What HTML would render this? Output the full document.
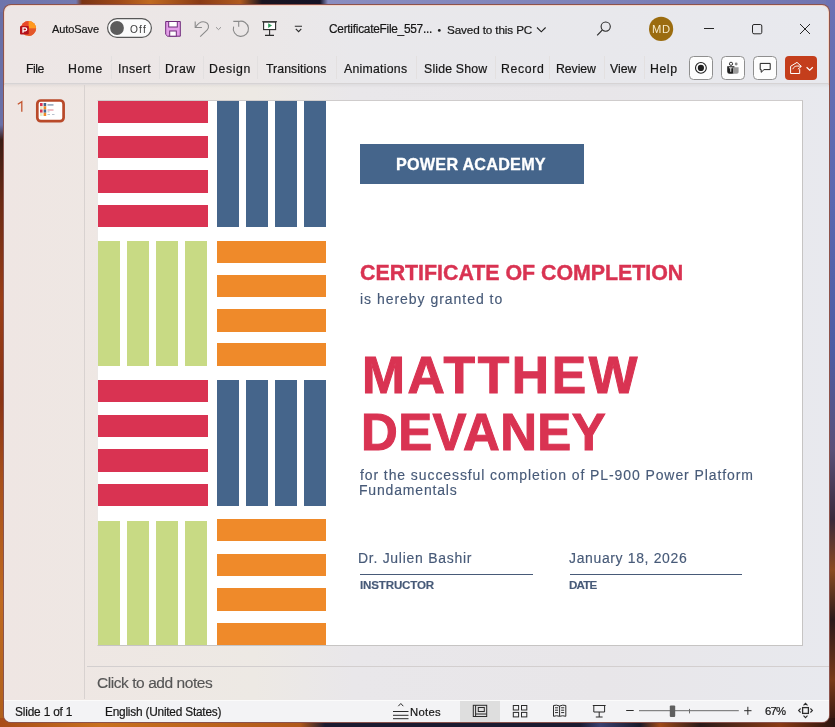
<!DOCTYPE html>
<html><head><meta charset="utf-8">
<style>
*{margin:0;padding:0;box-sizing:border-box}
html,body{width:835px;height:727px;overflow:hidden}
body{position:relative;font-family:"Liberation Sans",sans-serif;background:#6f73ab}
.a{position:absolute}
.t{position:absolute;white-space:nowrap;line-height:1;will-change:transform}
.tb{color:#161616;-webkit-text-stroke:0.2px #161616}
.tab{color:#161616;-webkit-text-stroke:0.2px #161616}
.sl{color:#161616;-webkit-text-stroke:0.2px #161616}
.ct{color:#d93352;font-weight:bold;-webkit-text-stroke:0.4px #d93352}
.bl{color:#475a78;-webkit-text-stroke:0.15px #475a78}
</style></head><body>
<!-- wallpaper -->
<div class="a" style="left:0;top:0;width:835px;height:727px;background:linear-gradient(90deg,#6e74ac 0,#7479b0 76px,#7a3414 82px,#a04a18 120px,#c06a20 150px,#8a3a14 200px,#b05a1e 240px,#1a1420 262px,#141226 320px,#8a8dc0 328px,#7e82b8 600px,#7074b0 835px)"></div>
<div class="a" style="left:0;top:12px;width:8px;height:715px;background:linear-gradient(180deg,#6a70a8 0,#6a70a8 113px,#3a1c14 128px,#6a2a14 188px,#9a3e16 288px,#8a3414 388px,#a8501a 468px,#c06a20 588px,#b0601c 715px)"></div>
<div class="a" style="left:826px;top:0;width:9px;height:727px;background:linear-gradient(180deg,#6c72b4 0,#5a68b0 200px,#4c5ca4 350px,#5a5078 450px,#3a2a3a 520px,#8a4a20 570px,#2a1a1a 620px,#7a3a18 680px,#2a1410 727px)"></div>
<div class="a" style="left:0;top:718px;width:835px;height:9px;background:linear-gradient(90deg,#a84c18 0,#c8701e 100px,#b0581a 300px,#1c1a30 325px,#1c1a30 580px,#3a4070 600px,#1a1a2a 640px,#a04a18 660px,#2a1a1a 700px,#8a3a14 780px,#2a1410 835px)"></div>

<!-- window -->
<div class="a" style="left:3px;top:4px;width:827px;height:719px;border-radius:8px;border:1px solid rgba(100,20,10,0.7);background-clip:padding-box;box-shadow:inset 0 0 0 1px #f7d6c8;background:linear-gradient(90deg,#ede6e5 0,#ebe7e7 250px,#e9e8eb 350px,#e8e8ec 600px,#e8e9ee 826px);overflow:hidden">
  <!-- ribbon bottom line -->
  <div class="a" style="left:0;top:78px;width:826px;height:1px;background:#d6d3d4"></div>
  <!-- content area -->
  <div class="a" style="left:0;top:80px;width:826px;height:616px;background:linear-gradient(90deg,#efe6e3 0,#ede9e4 250px,#e9e7ea 350px,#e8e6e9 600px,#e8e9ee 826px)"></div>
  <div class="a" style="left:0;top:79px;width:826px;height:4px;background:linear-gradient(180deg,rgba(0,0,0,0.05),rgba(0,0,0,0))"></div>
  <!-- sidebar separator -->
  <div class="a" style="left:80px;top:80px;width:1px;height:614px;background:#d8d2d0"></div>
  <!-- notes divider -->
  <div class="a" style="left:83px;top:661px;width:743px;height:1px;background:#d3cfcf"></div>
  <!-- status bar -->
  <div class="a" style="left:0;top:695px;width:826px;height:23px;background:#f3f3f5;border-top:1px solid #fbfbfb"></div>
  <div class="a" style="left:456px;top:696px;width:40px;height:22px;background:#dedede"></div>
</div>

<!-- slide -->
<div class="a" style="left:97px;top:100px;width:706px;height:546px;border:1px solid #c6c4c3;border-left-color:#ece8e6;border-top-color:#cfcccc;background:#fff"></div>
<div class="a" id="slide" style="left:98px;top:101px;width:704px;height:544px;overflow:hidden">
  <!-- row 1 -->
  <div class="a" style="left:0;top:0;width:110px;height:22px;background:#d93352"></div>
  <div class="a" style="left:0;top:35px;width:110px;height:22px;background:#d93352"></div>
  <div class="a" style="left:0;top:69px;width:110px;height:23px;background:#d93352"></div>
  <div class="a" style="left:0;top:104px;width:110px;height:22px;background:#d93352"></div>
  <div class="a" style="left:119px;top:0;width:22px;height:126px;background:#45658b"></div>
  <div class="a" style="left:148px;top:0;width:22px;height:126px;background:#45658b"></div>
  <div class="a" style="left:177px;top:0;width:22px;height:126px;background:#45658b"></div>
  <div class="a" style="left:206px;top:0;width:22px;height:126px;background:#45658b"></div>
  <!-- row 2 -->
  <div class="a" style="left:0;top:140px;width:22px;height:125px;background:#c8da84"></div>
  <div class="a" style="left:29px;top:140px;width:22px;height:125px;background:#c8da84"></div>
  <div class="a" style="left:58px;top:140px;width:22px;height:125px;background:#c8da84"></div>
  <div class="a" style="left:87px;top:140px;width:22px;height:125px;background:#c8da84"></div>
  <div class="a" style="left:119px;top:140px;width:109px;height:22px;background:#ef8a2a"></div>
  <div class="a" style="left:119px;top:174px;width:109px;height:22px;background:#ef8a2a"></div>
  <div class="a" style="left:119px;top:208px;width:109px;height:23px;background:#ef8a2a"></div>
  <div class="a" style="left:119px;top:242px;width:109px;height:23px;background:#ef8a2a"></div>
  <!-- row 3 -->
  <div class="a" style="left:0;top:279px;width:110px;height:22px;background:#d93352"></div>
  <div class="a" style="left:0;top:314px;width:110px;height:22px;background:#d93352"></div>
  <div class="a" style="left:0;top:348px;width:110px;height:23px;background:#d93352"></div>
  <div class="a" style="left:0;top:383px;width:110px;height:22px;background:#d93352"></div>
  <div class="a" style="left:119px;top:279px;width:22px;height:126px;background:#45658b"></div>
  <div class="a" style="left:148px;top:279px;width:22px;height:126px;background:#45658b"></div>
  <div class="a" style="left:177px;top:279px;width:22px;height:126px;background:#45658b"></div>
  <div class="a" style="left:206px;top:279px;width:22px;height:126px;background:#45658b"></div>
  <!-- row 4 -->
  <div class="a" style="left:0;top:420px;width:22px;height:124px;background:#c8da84"></div>
  <div class="a" style="left:29px;top:420px;width:22px;height:124px;background:#c8da84"></div>
  <div class="a" style="left:58px;top:420px;width:22px;height:124px;background:#c8da84"></div>
  <div class="a" style="left:87px;top:420px;width:22px;height:124px;background:#c8da84"></div>
  <div class="a" style="left:119px;top:418px;width:109px;height:22px;background:#ef8a2a"></div>
  <div class="a" style="left:119px;top:453px;width:109px;height:22px;background:#ef8a2a"></div>
  <div class="a" style="left:119px;top:487px;width:109px;height:23px;background:#ef8a2a"></div>
  <div class="a" style="left:119px;top:522px;width:109px;height:22px;background:#ef8a2a"></div>
</div>

<!-- slide text (page coords) -->
<div class="a" style="left:360px;top:144px;width:224px;height:40px;background:#45658b"></div>
<div class="t" id="pa" style="color:#fff;font-weight:bold;-webkit-text-stroke:0.3px #fff;left:396.2px;top:156.3px;font-size:16.20px;letter-spacing:0.23px;">POWER ACADEMY</div>
<div class="t ct" id="coc" style="left:360.0px;top:263.3px;font-size:21.4px;letter-spacing:-0.03px;">CERTIFICATE OF COMPLETION</div>
<div class="t bl" id="hg" style="left:359.6px;top:291.9px;font-size:14px;letter-spacing:0.97px;">is hereby granted to</div>
<div class="t ct" id="m1" style="-webkit-text-stroke:1px #d93352;left:361.7px;top:350.1px;font-size:51.6px;letter-spacing:2.59px;">MATTHEW</div>
<div class="t ct" id="m2" style="-webkit-text-stroke:1px #d93352;left:361.3px;top:407.6px;font-size:50.9px;letter-spacing:0.40px;">DEVANEY</div>
<div class="t bl" id="f1" style="left:360.3px;top:468.0px;font-size:14px;letter-spacing:0.91px;">for the successful completion of PL-900 Power Platform</div>
<div class="t bl" id="f2" style="left:359.0px;top:483.3px;font-size:14px;letter-spacing:0.82px;">Fundamentals</div>
<div class="t bl" id="s1" style="left:358.4px;top:552.3px;font-size:13.97px;letter-spacing:0.73px;">Dr. Julien Bashir</div>
<div class="t bl" id="s2" style="left:569.4px;top:552.3px;font-size:13.97px;letter-spacing:0.65px;">January 18, 2026</div>
<div class="a" style="left:360px;top:574px;width:173px;height:1px;background:#475a78"></div>
<div class="a" style="left:570px;top:574px;width:172px;height:1px;background:#475a78"></div>
<div class="t bl" id="s3" style="font-weight:bold;left:360.0px;top:580.0px;font-size:11.59px;letter-spacing:-0.17px;">INSTRUCTOR</div>
<div class="t bl" id="s4" style="font-weight:bold;left:569.4px;top:580.0px;font-size:11.59px;letter-spacing:-0.78px;">DATE</div>

<!-- notes / status text -->
<div class="t" id="notes" style="color:#555;-webkit-text-stroke:0.15px #555;left:97.0px;top:674.7px;font-size:15.50px;letter-spacing:-0.44px;">Click to add notes</div>
<div class="t sl" id="st1" style="left:15.4px;top:706.7px;font-size:11.87px;letter-spacing:-0.17px;">Slide 1 of 1</div>
<div class="t sl" id="st2" style="left:104.6px;top:706.7px;font-size:11.87px;letter-spacing:-0.22px;">English (United States)</div>
<div class="t sl" id="st3" style="left:410.0px;top:707.3px;font-size:11.31px;letter-spacing:0.27px;">Notes</div>
<div class="t sl" id="st4" style="left:765.0px;top:706.2px;font-size:11.31px;letter-spacing:-0.81px;">67%</div>

<!-- title bar text -->
<div class="t tb" id="as" style="left:51.8px;top:23.6px;font-size:11.03px;letter-spacing:-0.10px;">AutoSave</div>
<div class="t tb" id="ttl1" style="left:328.6px;top:24.4px;font-size:11.87px;letter-spacing:-0.26px;">CertificateFile_557...</div>
<div class="t tb" id="ttl2" style="left:446.8px;top:23.6px;font-size:11.73px;letter-spacing:-0.13px;">Saved to this PC</div>

<!-- tabs -->
<div class="t tab" id="tab1" style="left:25.8px;top:62.6px;font-size:12.29px;letter-spacing:-0.46px;">File</div>
<div class="t tab" id="tab2" style="left:68.4px;top:62.6px;font-size:12.29px;letter-spacing:0.53px;">Home</div>
<div class="t tab" id="tab3" style="left:118.2px;top:62.6px;font-size:12.29px;letter-spacing:0.41px;">Insert</div>
<div class="t tab" id="tab4" style="left:165.4px;top:62.6px;font-size:12.29px;letter-spacing:0.50px;">Draw</div>
<div class="t tab" id="tab5" style="left:208.8px;top:62.6px;font-size:12.29px;letter-spacing:0.62px;">Design</div>
<div class="t tab" id="tab6" style="left:265.6px;top:62.6px;font-size:12.29px;letter-spacing:0.07px;">Transitions</div>
<div class="t tab" id="tab7" style="left:344.2px;top:62.6px;font-size:12.29px;letter-spacing:0.26px;">Animations</div>
<div class="t tab" id="tab8" style="left:424.4px;top:62.6px;font-size:12.29px;letter-spacing:0.19px;">Slide Show</div>
<div class="t tab" id="tab9" style="left:501.2px;top:62.6px;font-size:12.29px;letter-spacing:0.63px;">Record</div>
<div class="t tab" id="tab10" style="left:555.8px;top:62.6px;font-size:12.29px;letter-spacing:-0.06px;">Review</div>
<div class="t tab" id="tab11" style="left:610.4px;top:62.6px;font-size:12.29px;letter-spacing:-0.00px;">View</div>
<div class="t tab" id="tab12" style="left:649.6px;top:62.6px;font-size:12.29px;letter-spacing:0.58px;">Help</div>

<!-- icons overlay -->
<svg class="a" style="left:0;top:0" width="835" height="727" viewBox="0 0 835 727">
  <!-- tab separators -->
  <g stroke="#e3e0e0" stroke-width="1">
    <path d="M111.5 56V79M159.5 56V79M203.5 56V79M257.5 56V79M336.5 56V79M416.5 56V79M495.5 56V79M549.5 56V79M604.5 56V79M644.5 56V79"/>
  </g>
  <!-- PPT logo -->
  <circle cx="28.5" cy="28.5" r="7.6" fill="#ed6a2e"/>
  <path d="M28.5 20.9A7.6 7.6 0 0 1 36.1 28.5H28.5Z" fill="#ff9a1f"/>
  <path d="M36.1 28.5A7.6 7.6 0 0 1 28.5 36.1V28.5Z" fill="#e4572a"/>
  <path d="M28.5 20.9A7.6 7.6 0 0 0 20.9 28.5H28.5Z" fill="#e8492a"/>
  <rect x="20" y="26" width="8.8" height="8.6" rx="1" fill="#b5121b"/>
  <path d="M23 32.8V27.8H25.2A1.5 1.5 0 0 1 25.2 30.8H23" stroke="#fff" stroke-width="1.3" fill="none"/>
  <!-- toggle -->
  <rect x="107.6" y="18.6" width="43.8" height="18.8" rx="9.4" fill="#fbfbfb" stroke="#575757" stroke-width="1.2"/>
  <circle cx="117" cy="28" r="6.9" fill="#5c5c5c"/>
  <!-- save -->
  <path d="M165.7 21.5H180.3V36.2H167.5L165.7 34.4Z" fill="#e39de8" stroke="#6e2b7a" stroke-width="1"/>
  <rect x="168.7" y="21.5" width="8.6" height="5.5" fill="#fff" stroke="#6e2b7a" stroke-width="1"/>
  <rect x="169.7" y="31" width="6.6" height="5.2" fill="#fff" stroke="#6e2b7a" stroke-width="1"/>
  <!-- undo -->
  <g stroke="#8a8a8a" stroke-width="1.1" fill="none">
    <path d="M195.2 21.4V27.5H201.9"/>
    <path d="M195.5 27.2C198.5 22.5 202.5 21.2 205.5 22.2C208.5 23.2 209.8 27 207 30.2L200.2 36.7"/>
    <path d="M216 27.2L218.5 29.6L221 27.2" stroke-width="0.9"/>
    <path d="M233.3 21.4H238.7V26.7"/>
    <path d="M238.7 21.5A7.6 7.6 0 1 1 233.6 26.6"/>
  </g>
  <!-- presenter -->
  <g stroke="#2b2b2b" stroke-width="1.1" fill="none">
    <rect x="263.6" y="22" width="12" height="7.6" fill="#fff"/>
    <path d="M262.1 21.8H277M269.6 29.6V35.4M265 35.4H274"/>
  </g>
  <path d="M268.2 23.3L272 25.6L268.2 28Z" fill="#2e9a5a"/>
  <!-- customize -->
  <g stroke="#2b2b2b" stroke-width="1.1" fill="none">
    <path d="M294.8 26.3H302M295.8 28.8L298.6 31.6L301.3 28.8"/>
  </g>
  <!-- bullet + title chevron -->
  <circle cx="439.3" cy="30.4" r="1.4" fill="#1f1f1f"/>
  <path d="M537 27.5L541.3 31.8L545.6 27.5" stroke="#1f1f1f" stroke-width="1.1" fill="none"/>
  <!-- search -->
  <circle cx="605.7" cy="26.6" r="4.6" stroke="#2b2b2b" stroke-width="1.1" fill="none"/>
  <path d="M602.4 29.9L597.2 35.3" stroke="#2b2b2b" stroke-width="1.2"/>
  <!-- avatar -->
  <circle cx="661.1" cy="28.9" r="12.1" fill="#9b6c0f"/>
  <!-- window controls -->
  <g stroke="#262626" stroke-width="1" fill="none">
    <path d="M704 28.5H714"/>
    <rect x="752.5" y="24.5" width="9.3" height="9.3" rx="1.5"/>
    <path d="M800 24L810 34M810 24L800 34"/>
  </g>
  <!-- ribbon right buttons -->
  <rect x="689.5" y="56.5" width="23" height="23" rx="4" fill="#fdfdfd" stroke="#8f8f8f"/>
  <circle cx="700.9" cy="67.9" r="5.4" fill="none" stroke="#1f1f1f" stroke-width="1.1"/>
  <circle cx="700.9" cy="67.9" r="3.1" fill="#1f1f1f"/>
  <rect x="721.5" y="56.5" width="23" height="23" rx="4" fill="#fdfdfd" stroke="#8f8f8f"/>
  <circle cx="731" cy="63.8" r="1.6" fill="none" stroke="#1f1f1f" stroke-width="0.9"/>
  <circle cx="736.2" cy="64" r="1.4" fill="#888"/>
  <path d="M727.2 66.2H734.4V71.5A2.3 2.3 0 0 1 732 73.8H729.6A2.3 2.3 0 0 1 727.2 71.5Z" fill="#1f1f1f"/>
  <path d="M733 67.2H738.6V72A1.8 1.8 0 0 1 736.8 73.8H733Z" fill="#9a9a9a"/>
  <path d="M728.9 67.8H732.6M730.75 67.8V71.8" stroke="#fff" stroke-width="0.9"/>
  <rect x="753.5" y="56.5" width="23" height="23" rx="4" fill="#fdfdfd" stroke="#8f8f8f"/>
  <path d="M760.2 63.4H770.2V69.6H764L761.2 72.3V69.6H760.2Z" fill="none" stroke="#1f1f1f" stroke-width="1"/>
  <rect x="785" y="56" width="32" height="24" rx="4" fill="#c43e1c"/>
  <g stroke="#fff" stroke-width="1" fill="none">
    <path d="M790.6 66.3V73.5H799.7V69.2"/>
    <path d="M790.6 66.3L797 62.4L801.4 66.4L797.9 69.2"/>
    <path d="M792.9 69.2C793.6 66.4 796.3 65.4 801 66.4"/>
    <path d="M806.6 67.2L809.7 70.2L812.8 67.2" stroke-width="1.2"/>
  </g>
  <!-- status bar icons -->
  <g stroke="#2b2b2b" stroke-width="1" fill="none">
    <path d="M393 711.5H408.5M393 715.3H408.5M393 718.7H408.5M398.3 706.2L400.8 703.5L403.3 706.2"/>
    <rect x="473.3" y="705.3" width="13.4" height="11.2"/>
    <rect x="478.3" y="707.5" width="6" height="4"/>
    <path d="M475.6 705.3V716.5M475.6 714H486.7"/>
    <rect x="513.3" y="705.5" width="5.3" height="4.5"/>
    <rect x="521.5" y="705.5" width="5.3" height="4.5"/>
    <rect x="513.3" y="712.4" width="5.3" height="4.5"/>
    <rect x="521.5" y="712.4" width="5.3" height="4.5"/>
    <path d="M553.5 705.5Q556.5 704.6 559.6 706V716.3Q556.5 715.2 553.5 716.3ZM559.6 706Q562.7 704.6 565.8 705.5V716.3Q562.7 715.2 559.6 716.3M555 707.8H558.1M555 710.2H558.1M555 712.6H558.1M561.1 707.8H564.2M561.1 710.2H564.2M561.1 712.6H564.2"/>
    <path d="M592.8 705.5H605.6M593.8 705.5V712H604.6V705.5M599.2 712V717M595.8 717H602.6"/>
    <path d="M626.2 710.5H633.7M744.2 710.7H751.5M747.85 706.8V714.8"/>
    <path d="M639 710.7H738.8" stroke="#6b6b6b"/>
    <path d="M689.5 708.9V713.4" stroke="#6b6b6b"/>
    <rect x="802.6" y="707.6" width="5.8" height="5.8" stroke-width="1.3"/>
    <path d="M803.5 705.4L805.5 703.4L807.5 705.4M803.5 715.6L805.5 717.6L807.5 715.6M800.6 708.5L798.6 710.5L800.6 712.5M810.4 708.5L812.4 710.5L810.4 712.5" stroke-width="1.1"/>
  </g>
  <rect x="669.8" y="705.6" width="5.4" height="11.4" rx="1" fill="#5f5f5f"/>
  <!-- slide number -->
  <path d="M17.8 104.3L21.8 101.6V111.8" stroke="#c4552f" stroke-width="1.3" fill="none"/>
  <!-- thumbnail -->
  <rect x="37.3" y="100.5" width="26.3" height="20.7" rx="3.5" fill="#fff" stroke="#b94a2a" stroke-width="2.7"/>
  <rect x="40" y="103" width="2.6" height="3.2" fill="#d93352"/>
  <rect x="40" y="106.3" width="2.6" height="3.2" fill="#e8eec8"/>
  <rect x="40" y="109.5" width="2.6" height="3.2" fill="#d93352"/>
  <rect x="40" y="112.8" width="2.6" height="3.2" fill="#e8eec8"/>
  <rect x="43.6" y="103" width="2.6" height="3.2" fill="#45658b"/>
  <rect x="43.6" y="106.3" width="2.6" height="3.2" fill="#ef8a2a"/>
  <rect x="43.6" y="109.5" width="2.6" height="3.2" fill="#45658b"/>
  <rect x="43.6" y="112.8" width="2.6" height="3.2" fill="#ef8a2a"/>
  <rect x="47.5" y="104.5" width="6" height="0.9" fill="#45658b"/>
  <rect x="47.5" y="109.6" width="6" height="0.8" fill="#d96070"/>
  <rect x="47.5" y="111.6" width="2" height="0.6" fill="#8a9ab0"/>
  <rect x="47.5" y="114" width="2.5" height="0.6" fill="#8a9ab0"/>
  <rect x="52" y="114" width="2.5" height="0.6" fill="#8a9ab0"/>
</svg>
<div class="t" id="off" style="color:#3a3a3a;left:129.8px;top:25.0px;font-size:10.20px;letter-spacing:1.20px;">Off</div>
<div class="t" id="md" style="color:#f6eac8;left:651.8px;top:23.5px;font-size:11.2px;letter-spacing:0.80px;">MD</div>

</body></html>
